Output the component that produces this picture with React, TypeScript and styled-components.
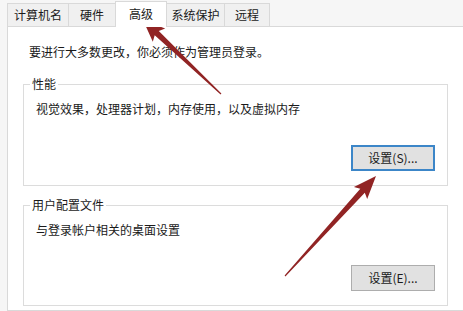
import React from 'react'
import styled, { createGlobalStyle } from 'styled-components'

const GlobalStyle = createGlobalStyle`
  html, body {
    margin: 0;
    padding: 0;
    background: #f6f6f6;
  }
  body {
    font-family: "Noto Sans CJK SC", "Noto Sans", sans-serif;
  }
`

const Frame = styled.div`
  box-sizing: border-box;
  display: flex;
  flex-direction: column;
  height: 311px;
  overflow: hidden;
  padding: 3px 0 0 7px;
  position: relative;
  width: 463px;
`

const TabStrip = styled.div`
  align-items: flex-end;
  display: flex;
  height: 23px;
`

const Tab = styled.div<{ $width: number; $active?: boolean }>`
  align-items: center;
  background: ${({ $active }) => ($active ? '#ffffff' : '#f0f0f0')};
  border: 1px solid #d9d9d9;
  border-bottom: none;
  box-sizing: border-box;
  color: #1a1a1a;
  display: flex;
  font-size: 12px;
  height: ${({ $active }) => ($active ? '26px' : '23px')};
  justify-content: center;
  line-height: 16px;
  margin-bottom: ${({ $active }) => ($active ? '-1px' : '0')};
  margin-left: -1px;
  padding-bottom: ${({ $active }) => ($active ? '2px' : '0')};
  position: relative;
  width: ${({ $width }) => $width}px;
  z-index: ${({ $active }) => ($active ? 1 : 0)};

  &:first-child {
    margin-left: 0;
  }
`

const Panel = styled.div`
  background: #ffffff;
  border: 1px solid #d9d9d9;
  display: flex;
  flex: 1;
  flex-direction: column;
  margin-right: -10px;
  padding: 17px 0 0 15px;
`

const Intro = styled.p`
  color: #1a1a1a;
  font-size: 12px;
  line-height: 16px;
  margin: 0 0 16px 6px;
`

const Group = styled.fieldset<{ $gap?: number }>`
  border: 1px solid #dcdcdc;
  box-sizing: border-box;
  margin: 0 0 ${({ $gap }) => $gap ?? 0}px 0;
  padding: 9px 12px 14px 12px;
  width: 425px;
`

const Legend = styled.legend`
  color: #1a1a1a;
  font-size: 12px;
  line-height: 16px;
  margin-left: -6px;
  padding: 0 2px;
`

const Description = styled.div`
  color: #1a1a1a;
  font-size: 12px;
  line-height: 16px;
`

const ButtonRow = styled.div<{ $top: number }>`
  display: flex;
  justify-content: flex-end;
  margin-top: ${({ $top }) => $top}px;
`

const Button = styled.button<{ $focused?: boolean }>`
  background: #e1e1e1;
  border: ${({ $focused }) => ($focused ? '2px solid #3c86c8' : '1px solid #adadad')};
  box-sizing: border-box;
  color: #1a1a1a;
  font-family: "Noto Sans CJK SC", "Noto Sans", sans-serif;
  font-size: 12px;
  height: 26px;
  line-height: 16px;
  padding: 0;
  width: 84px;
`

const Overlay = styled.svg`
  height: 311px;
  left: 0;
  pointer-events: none;
  position: absolute;
  top: 0;
  width: 463px;
`

type Pt = [number, number]

// tapered annotation arrow: thin tail, wider shaft near the head
const arrowPoints = (tail: Pt, tip: Pt, headLen: number, headHalf: number, shaftHalf: number) => {
  const dx = tip[0] - tail[0]
  const dy = tip[1] - tail[1]
  const len = Math.hypot(dx, dy)
  const ux = dx / len
  const uy = dy / len
  const nx = -uy
  const ny = ux
  const bx = tip[0] - ux * headLen
  const by = tip[1] - uy * headLen
  const back = 3
  const pts: Pt[] = [
    [tail[0] + nx * 0.6, tail[1] + ny * 0.6],
    [bx + nx * shaftHalf, by + ny * shaftHalf],
    [bx - ux * back + nx * headHalf, by - uy * back + ny * headHalf],
    tip,
    [bx - ux * back - nx * headHalf, by - uy * back - ny * headHalf],
    [bx - nx * shaftHalf, by - ny * shaftHalf],
    [tail[0] - nx * 0.6, tail[1] - ny * 0.6],
  ]
  return pts.map((p) => `${p[0].toFixed(1)},${p[1].toFixed(1)}`).join(' ')
}

const tabs = [
  { label: '计算机名', width: 62 },
  { label: '硬件', width: 48 },
  { label: '高级', width: 52, active: true },
  { label: '系统保护', width: 59 },
  { label: '远程', width: 46 },
]

export default function App() {
  return (
    <>
      <GlobalStyle />
      <Frame>
        <TabStrip>
          {tabs.map((t) => (
            <Tab key={t.label} $width={t.width} $active={t.active}>
              {t.label}
            </Tab>
          ))}
        </TabStrip>
        <Panel>
          <Intro>要进行大多数更改，你必须作为管理员登录。</Intro>
          <Group $gap={11}>
            <Legend>性能</Legend>
            <Description>视觉效果，处理器计划，内存使用，以及虚拟内存</Description>
            <ButtonRow $top={28}>
              <Button $focused>设置(S)...</Button>
            </ButtonRow>
          </Group>
          <Group>
            <Legend>用户配置文件</Legend>
            <Description>与登录帐户相关的桌面设置</Description>
            <ButtonRow $top={27}>
              <Button>设置(E)...</Button>
            </ButtonRow>
          </Group>
        </Panel>
        <Overlay viewBox="0 0 463 311">
          <polygon points={arrowPoints([221, 94], [143, 20], 19, 9, 3)} fill="#912424" />
          <polygon points={arrowPoints([285, 276], [376, 176], 20, 9, 3)} fill="#912424" />
        </Overlay>
      </Frame>
    </>
  )
}
